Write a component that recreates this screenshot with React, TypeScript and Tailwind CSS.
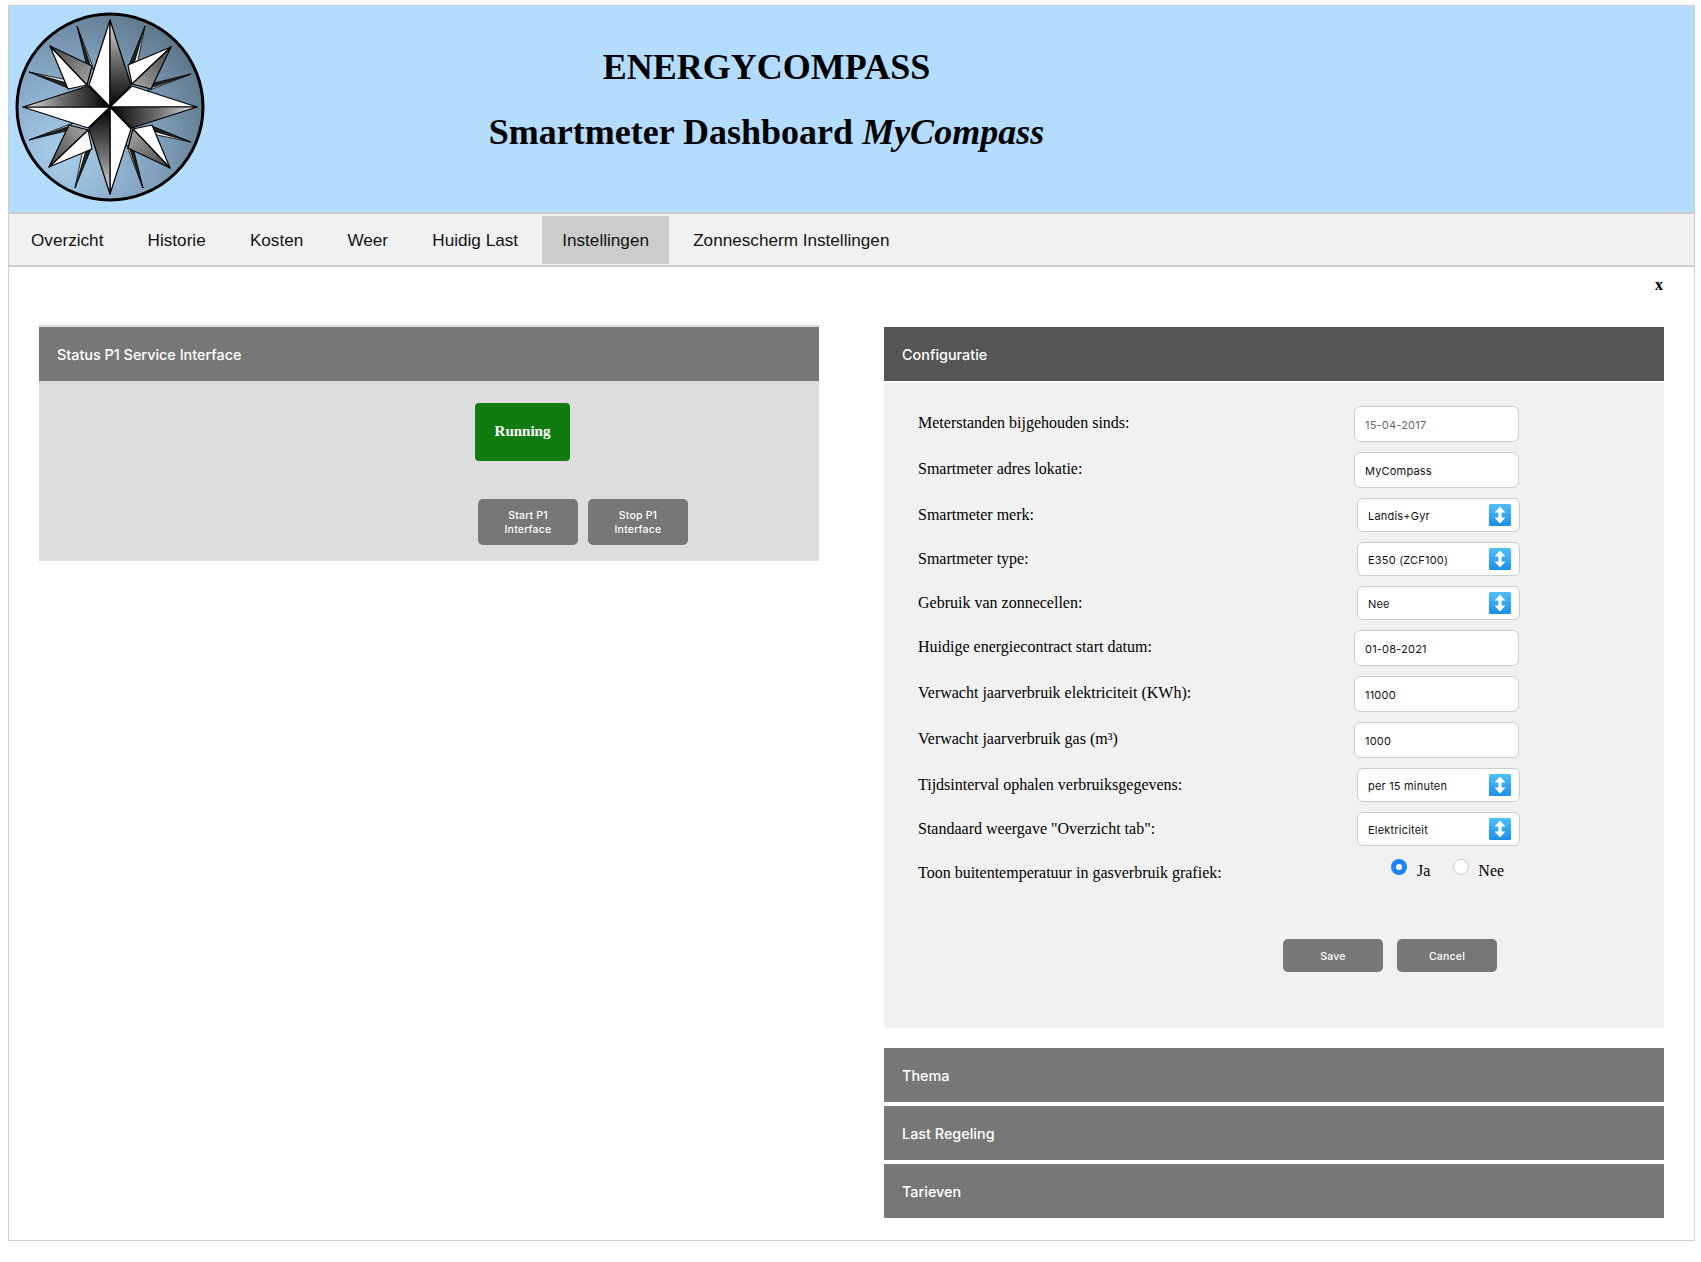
import React from 'react';

const serif = '[font-family:"Liberation_Serif",serif]';
const sans = '[font-family:"Liberation_Sans",Arial,sans-serif]';

const navItems = ['Overzicht', 'Historie', 'Kosten', 'Weer', 'Huidig Last', 'Instellingen', 'Zonnescherm Instellingen'];

const Logo = () => (
  <svg width="196" height="196" viewBox="-98 -98 196 196" className="shrink-0">
    <defs>
      <radialGradient id="disc" cx="25%" cy="75%" r="95%">
        <stop offset="0%" stopColor="#a9cfee" />
        <stop offset="55%" stopColor="#7f9fba" />
        <stop offset="100%" stopColor="#53697b" />
      </radialGradient>
      <linearGradient id="arm" gradientUnits="userSpaceOnUse" x1="0" y1="0" x2="0" y2="-88">
        <stop offset="0%" stopColor="#000000" />
        <stop offset="55%" stopColor="#707070" />
        <stop offset="100%" stopColor="#e8e8e8" />
      </linearGradient>
      <linearGradient id="diag" gradientUnits="userSpaceOnUse" x1="20" y1="-20" x2="61" y2="-60">
        <stop offset="0%" stopColor="#a8a8a8" />
        <stop offset="100%" stopColor="#444444" />
      </linearGradient>
    </defs>
    <circle r="93" fill="url(#disc)" stroke="#000" strokeWidth="3" />
    {[0, 90, 180, 270].map((deg) => (
      <g key={`s${deg}`} transform={`rotate(${deg})`} stroke="#000" strokeWidth="0.8">
        <path d="M35 -81 L19 -42 L23 -40 Z" fill="#222" />
        <path d="M35 -81 L23 -40 L26 -37 Z" fill="#e4e8ec" />
        <path d="M81 -33 L42 -19 L40 -23 Z" fill="#222" />
        <path d="M81 -33 L40 -19 L37 -16 Z" fill="#e4e8ec" />
      </g>
    ))}
    {[0, 90, 180, 270].map((deg) => (
      <g key={`d${deg}`} transform={`rotate(${deg})`} stroke="#000" strokeWidth="1.2" strokeLinejoin="round">
        <path d="M61 -60 L18 -42 L22 -23 Z" fill="#fff" />
        <path d="M61 -60 L22 -23 L41 -18 Z" fill="url(#diag)" />
      </g>
    ))}
    {[0, 90, 180, 270].map((deg) => (
      <g key={`m${deg}`} transform={`rotate(${deg})`} stroke="#000" strokeWidth="1.2" strokeLinejoin="round">
        <path d="M0 -87 L-21 -22 L0 0 Z" fill="#fff" />
        <path d="M0 -87 L21 -22 L0 0 Z" fill="url(#arm)" />
      </g>
    ))}
  </svg>
);

const Stepper = () => (
  <svg width="22" height="22" viewBox="0 0 22 22" className="shrink-0">
    <defs>
      <linearGradient id="step" x1="0" y1="0" x2="0" y2="1">
        <stop offset="0%" stopColor="#4fc0fb" />
        <stop offset="100%" stopColor="#1c8fe8" />
      </linearGradient>
    </defs>
    <rect width="22" height="22" rx="1.5" fill="url(#step)" />
    <path d="M11 2.5 L16.5 8.5 L12.6 8.5 L12.6 13.5 L16.5 13.5 L11 19.5 L5.5 13.5 L9.4 13.5 L9.4 8.5 L5.5 8.5 Z" fill="#fff" />
  </svg>
);

const TextField = ({ value, muted }: { value: string; muted?: boolean }) => (
  <input
    readOnly
    value={value}
    className={`w-[165px] h-9 bg-white border border-[#cccccc] rounded-md pl-[10px] pt-[1px] text-[11px] tracking-[0.2px] [font-family:Inter,sans-serif] outline-none ${muted ? 'text-[#666666]' : 'text-[#111111]'}`}
  />
);

const SelectField = ({ value }: { value: string }) => (
  <div className="ml-[3px] w-[163px] h-[34px] bg-white border border-[#cccccc] rounded-md pl-[10px] pr-2 flex items-center justify-between text-[11px] tracking-[0.2px] text-[#111111] [font-family:Inter,sans-serif]">
    <span className="pt-[2px]">{value}</span>
    <Stepper />
  </div>
);

const Row = ({ label, select, children }: { label: string; select?: boolean; children: React.ReactNode }) => (
  <div className="flex items-center">
    <div className={`w-[436px] text-[16px] text-black ${select ? 'pb-[1px]' : 'pb-[3px]'} ${serif}`}>{label}</div>
    {children}
  </div>
);

const Radio = ({ on, label, className }: { on?: boolean; label: string; className: string }) => (
  <div className={`flex items-start ${className}`}>
    <span className={`w-4 h-4 rounded-full flex items-center justify-center ${on ? 'bg-[#1f83f5]' : 'bg-white border border-[#c8c8c8]'}`}>
      {on && <span className="w-[6px] h-[6px] rounded-full bg-white" />}
    </span>
    <span className={`mt-[3px] text-[16px] leading-[18px] text-black ${on ? 'ml-[10px]' : 'ml-[9px]'} ${serif}`}>{label}</span>
  </div>
);

const PanelHead = ({ title, dark }: { title: string; dark?: boolean }) => (
  <div className={`h-[54px] flex items-center pl-[18px] pt-[1px] text-[14.4px] text-white [font-family:Inter,sans-serif] font-medium ${dark ? 'bg-[#555555]' : 'bg-[#777777]'}`}>
    {title}
  </div>
);

const SmallButton = ({ children, className }: { children: React.ReactNode; className: string }) => (
  <button className={`bg-[#777777] rounded-[5px] pt-[2px] text-white text-[10.5px] leading-[14px] tracking-[0.2px] font-medium [font-family:Inter,sans-serif] ${className}`}>
    {children}
  </button>
);

export default function App() {
  return (
    <div className="min-h-[1262px] bg-white pt-[5px] px-2">
      <div className="w-[1687px] h-[1236px] border border-[#cccccc] flex flex-col">
        <header className="h-[206px] bg-[#b3dcff] flex items-start pl-[3px] pt-[3px]">
          <Logo />
          <div className={`w-[1105px] ml-[6px] pt-[37px] text-center text-black font-bold ${serif}`}>
            <div className="text-[36px] leading-[42px]">ENERGYCOMPASS</div>
            <div className="mt-[23px] text-[36px] leading-[42px]">
              Smartmeter Dashboard <i>MyCompass</i>
            </div>
          </div>
        </header>

        <nav className={`h-[55px] bg-[#f1f1f1] border-y-2 border-[#cccccc] flex items-end pb-[1px] pl-[2px] gap-[4.2px] text-[17.15px] text-[#111111] ${sans}`}>
          {navItems.map((item) => (
            <a key={item} className={`h-12 px-5 pt-[2px] flex items-center ${item === 'Instellingen' ? 'bg-[#cccccc]' : ''}`}>
              {item}
            </a>
          ))}
        </nav>

        <div className={`h-[58px] flex justify-end pr-[31px] pt-[6px] text-[16px] font-bold text-black ${serif}`}>x</div>

        <main className="flex gap-[65px] pl-[30px]">
          <section className="w-[780px] self-start border-t-2 border-[#dddddd]">
            <PanelHead title="Status P1 Service Interface" />
            <div className="h-[180px] bg-[#dddddd] pl-[436px] pt-[22px]">
              <div className={`w-[95px] h-[58px] pb-[1px] bg-[#107c10] rounded-[4px] flex items-center justify-center text-white text-[15px] font-bold ${serif}`}>
                Running
              </div>
              <div className="flex gap-[10px] ml-[3px] mt-[38px]">
                <SmallButton className="w-[100px] h-[46px]">Start P1<br />Interface</SmallButton>
                <SmallButton className="w-[100px] h-[46px]">Stop P1<br />Interface</SmallButton>
              </div>
            </div>
          </section>

          <section className="w-[780px] pt-[2px]">
            <PanelHead title="Configuratie" dark />
            <div className="mt-[2px] h-[645px] bg-[#f1f1f1] pt-[23px] pl-[34px] flex flex-col gap-[10px]">
              <Row label="Meterstanden bijgehouden sinds:"><TextField value="15-04-2017" muted /></Row>
              <Row label="Smartmeter adres lokatie:"><TextField value="MyCompass" /></Row>
              <Row select label="Smartmeter merk:"><SelectField value="Landis+Gyr" /></Row>
              <Row select label="Smartmeter type:"><SelectField value="E350 (ZCF100)" /></Row>
              <Row select label="Gebruik van zonnecellen:"><SelectField value="Nee" /></Row>
              <Row label="Huidige energiecontract start datum:"><TextField value="01-08-2021" /></Row>
              <Row label="Verwacht jaarverbruik elektriciteit (KWh):"><TextField value="11000" /></Row>
              <Row label="Verwacht jaarverbruik gas (m³)"><TextField value="1000" /></Row>
              <Row select label="Tijdsinterval ophalen verbruiksgegevens:"><SelectField value="per 15 minuten" /></Row>
              <Row select label='Standaard weergave "Overzicht tab":'><SelectField value="Elektriciteit" /></Row>
              <div className="flex items-start">
                <div className={`w-[436px] mt-[5px] text-[16px] text-black ${serif}`}>Toon buitentemperatuur in gasverbruik grafiek:</div>
                <Radio on label="Ja" className="ml-[37px] mt-[3px]" />
                <Radio label="Nee" className="ml-[23px] mt-[3px]" />
              </div>
              <div className="flex gap-[14px] ml-[365px] mt-[44px]">
                <SmallButton className="w-[100px] h-[33px]">Save</SmallButton>
                <SmallButton className="w-[100px] h-[33px]">Cancel</SmallButton>
              </div>
            </div>
            <div className="mt-[20px] flex flex-col gap-1">
              <PanelHead title="Thema" />
              <PanelHead title="Last Regeling" />
              <PanelHead title="Tarieven" />
            </div>
          </section>
        </main>
      </div>
    </div>
  );
}
